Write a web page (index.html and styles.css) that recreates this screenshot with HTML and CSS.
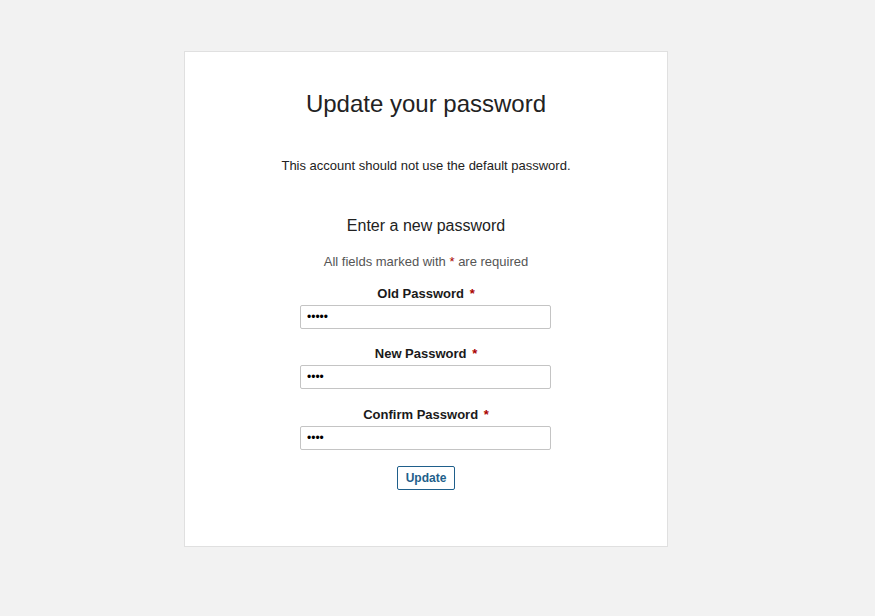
FILE: index.html
```html
<!DOCTYPE html>
<html>
<head>
<meta charset="utf-8">
<link rel="stylesheet" href="styles.css">
</head>
<body>
<div class="card">
  <h1 class="title">Update your password</h1>
  <p class="notice">This account should not use the default password.</p>
  <h2 class="subtitle">Enter a new password</h2>
  <p class="hint">All fields marked with <span class="req">*</span> are required</p>
  <form class="form">
    <div class="field">
      <label class="label">Old Password <span class="req">*</span></label>
      <input class="input" type="password" value="12345">
    </div>
    <div class="field field-wide">
      <label class="label">New Password <span class="req">*</span></label>
      <input class="input" type="password" value="1234">
    </div>
    <div class="field field-last">
      <label class="label">Confirm Password <span class="req">*</span></label>
      <input class="input" type="password" value="1234">
    </div>
    <button class="btn" type="button">Update</button>
  </form>
</div>
</body>
</html>
```
FILE: styles.css
```css
html, body {
  margin: 0;
  padding: 0;
  background: #f2f2f2;
  font-family: "Liberation Sans", Arial, sans-serif;
  color: #1a1a1a;
}
body {
  padding-top: 51px;
}
.card {
  box-sizing: border-box;
  width: 484px;
  height: 496px;
  margin-left: 184px;
  background: #fff;
  border: 1px solid #e0e0e0;
  text-align: center;
  padding-top: 38px;
}
.title {
  margin: 0;
  font-size: 24px;
  font-weight: normal;
  line-height: 28px;
  color: #222;
}
.notice {
  margin: 40px 0 0;
  font-size: 13px;
  line-height: 15px;
  color: #222;
}
.subtitle {
  margin: 43px 0 0;
  font-size: 16px;
  font-weight: normal;
  line-height: 19px;
  color: #222;
}
.hint {
  margin: 19px 0 0;
  font-size: 13px;
  line-height: 15px;
  color: #555;
}
.req {
  color: #a00;
}
.form {
  display: flex;
  flex-direction: column;
  align-items: center;
  margin-top: 17px;
}
.field {
  display: flex;
  flex-direction: column;
  align-items: center;
  margin-bottom: 17px;
}
.field-wide {
  margin-bottom: 18px;
}
.field-last {
  margin-bottom: 16px;
}
.label {
  font-size: 13px;
  font-weight: bold;
  line-height: 15px;
  color: #1a1a1a;
  margin-bottom: 4px;
}
.label .req {
  margin-left: 2px;
}
.input {
  box-sizing: border-box;
  width: 251px;
  height: 24px;
  border: 1px solid #c4c4c4;
  border-radius: 2px;
  padding: 0 6px;
  font-family: "Liberation Sans", Arial, sans-serif;
  font-size: 12px;
  background: #fff;
  color: #000;
  margin: 0 0 0 -1px;
}
.btn {
  box-sizing: border-box;
  height: 24px;
  padding: 0 8px;
  margin-top: 0;
  background: #fff;
  border: 1px solid #1f5f8b;
  border-radius: 2px;
  color: #1f5f8b;
  font-family: "Liberation Sans", Arial, sans-serif;
  font-size: 12px;
  font-weight: bold;
}
```
